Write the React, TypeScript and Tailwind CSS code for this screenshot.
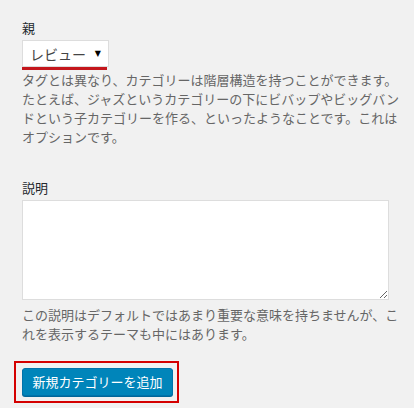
export default function App() {
  return (
    <div className="min-h-[408px] w-[414px] bg-[#f1f1f1] pl-[22px] pt-[18px] font-['Noto_Sans_CJK_JP','Noto_Sans',sans-serif] text-[13px] text-[#23282d]">
      {/* Parent */}
      <label className="block leading-[19px]">親</label>
      <div className="mt-[3px] w-[87px]">
        <div className="flex h-[27px] items-center border border-[#ddd] bg-white pl-[7px] pr-[7px] text-[14px] text-[#444]">
          <span className="leading-none">レビュー</span>
          <span className="ml-auto font-['DejaVu_Sans',sans-serif] text-[8px] leading-none text-black">▼</span>
        </div>
        <div className="h-[3px] w-[85px] bg-[#c4161c]" />
      </div>
      <p className="w-[382px] leading-[19px] text-[#666]">
        タグとは異なり、カテゴリーは階層構造を持つことができます。たとえば、ジャズというカテゴリーの下にビバップやビッグバンドという子カテゴリーを作る、といったようなことです。これはオプションです。
      </p>

      {/* Description */}
      <label className="mt-[32px] block leading-[19px]">説明</label>
      <textarea className="mt-[3px] block h-[100px] w-[367px] border border-[#ddd] bg-white" />
      <p className="mt-[5px] w-[382px] leading-[19px] text-[#666]">
        この説明はデフォルトではあまり重要な意味を持ちませんが、これを表示するテーマも中にはあります。
      </p>

      {/* Submit */}
      <div className="-ml-2 mt-[18px] inline-block border-2 border-[#d40000] pb-[5px] pl-[6px] pr-[4px] pt-[5px]">
        <button className="flex h-[28px] w-[151px] items-center justify-center rounded-[3px] border border-[#0073aa] bg-[#0085ba] text-[13px] text-white shadow-[0_1px_0_#006799]">
          新規カテゴリーを追加
        </button>
      </div>
    </div>
  );
}
